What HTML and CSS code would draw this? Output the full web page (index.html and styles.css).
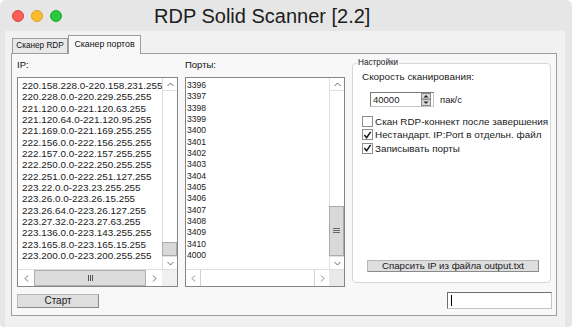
FILE: index.html
```html
<!DOCTYPE html>
<html>
<head>
<meta charset="utf-8">
<link rel="stylesheet" href="styles.css">
</head>
<body>
<div class="window">
  <div class="titlebar">
    <div class="lights">
      <span class="light red"></span><span class="light yellow"></span><span class="light green"></span>
    </div>
    <div class="title">RDP Solid Scanner [2.2]</div>
  </div>
  <div class="content">
    <div class="tabs">
      <div class="tab">Сканер RDP</div>
      <div class="tab active">Сканер портов</div>
    </div>
    <div class="panel">
      <div class="top-row">
        <div class="col ip-col">
          <div class="label">IP:</div>
          <div class="listbox ip-list">
            <div class="items ip-items">
              <div>220.158.228.0-220.158.231.255</div>
              <div>220.228.0.0-220.229.255.255</div>
              <div>221.120.0.0-221.120.63.255</div>
              <div>221.120.64.0-221.120.95.255</div>
              <div>221.169.0.0-221.169.255.255</div>
              <div>222.156.0.0-222.156.255.255</div>
              <div>222.157.0.0-222.157.255.255</div>
              <div>222.250.0.0-222.250.255.255</div>
              <div>222.251.0.0-222.251.127.255</div>
              <div>223.22.0.0-223.23.255.255</div>
              <div>223.26.0.0-223.26.15.255</div>
              <div>223.26.64.0-223.26.127.255</div>
              <div>223.27.32.0-223.27.63.255</div>
              <div>223.136.0.0-223.143.255.255</div>
              <div>223.165.8.0-223.165.15.255</div>
              <div>223.200.0.0-223.200.255.255</div>
            </div>
            <div class="vscroll">
              <div class="varrow"><svg width="7" height="5" viewBox="0 0 7 5"><polyline points="0.5,4 3.5,1 6.5,4" fill="none" stroke="#6a6a6a" stroke-width="1"/></svg></div>
              <div class="track"><div class="thumb ip-thumb"></div></div>
              <div class="varrow"><svg width="7" height="5" viewBox="0 0 7 5"><polyline points="0.5,1 3.5,4 6.5,1" fill="none" stroke="#6a6a6a" stroke-width="1"/></svg></div>
            </div>
            <div class="hscroll">
              <div class="harrow ip-harrow"><svg width="5" height="7" viewBox="0 0 5 7"><polyline points="4,0.5 1,3.5 4,6.5" fill="none" stroke="#6a6a6a" stroke-width="1"/></svg></div>
              <div class="hthumb"><svg width="7" height="6" viewBox="0 0 7 6"><path d="M1.5 0v6M3.5 0v6M5.5 0v6" stroke="#555" stroke-width="1"/></svg></div>
              <div class="harrow ip-harrow"><svg width="5" height="7" viewBox="0 0 5 7"><polyline points="1,0.5 4,3.5 1,6.5" fill="none" stroke="#6a6a6a" stroke-width="1"/></svg></div>
              <div class="corner"></div>
            </div>
          </div>
        </div>
        <div class="col port-col">
          <div class="label">Порты:</div>
          <div class="listbox port-list">
            <div class="items port-items">
              <div>3396</div><div>3397</div><div>3398</div><div>3399</div>
              <div>3400</div><div>3401</div><div>3402</div><div>3403</div>
              <div>3404</div><div>3405</div><div>3406</div><div>3407</div>
              <div>3408</div><div>3409</div><div>3410</div><div>4000</div>
            </div>
            <div class="vscroll">
              <div class="varrow"><svg width="7" height="5" viewBox="0 0 7 5"><polyline points="0.5,4 3.5,1 6.5,4" fill="none" stroke="#6a6a6a" stroke-width="1"/></svg></div>
              <div class="track"><div class="thumb port-thumb"><svg width="7" height="6" viewBox="0 0 7 6"><path d="M0 0.5h7M0 2.5h7M0 4.5h7" stroke="#666" stroke-width="1"/></svg></div></div>
              <div class="varrow"><svg width="7" height="5" viewBox="0 0 7 5"><polyline points="0.5,1 3.5,4 6.5,1" fill="none" stroke="#6a6a6a" stroke-width="1"/></svg></div>
            </div>
            <div class="hscroll">
              <div class="harrow port-harrow"><svg width="5" height="7" viewBox="0 0 5 7"><polyline points="4,0.5 1,3.5 4,6.5" fill="none" stroke="#8a8a8a" stroke-width="1"/></svg></div>
              <div class="hthumb empty"></div>
              <div class="harrow port-harrow"><svg width="5" height="7" viewBox="0 0 5 7"><polyline points="1,0.5 4,3.5 1,6.5" fill="none" stroke="#8a8a8a" stroke-width="1"/></svg></div>
              <div class="corner dotted"></div>
            </div>
          </div>
        </div>
        <div class="col settings-col">
          <fieldset class="group">
            <legend>Настройки</legend>
            <div class="group-body">
              <div class="speed-label">Скорость сканирования:</div>
              <div class="spin-row">
                <div class="spinbox">
                  <span class="spin-value">40000</span>
                  <svg class="spin-btn" width="10" height="13" viewBox="0 0 10 13">
                    <rect x="0.5" y="0.5" width="9" height="5.5" fill="#d8d8d8" stroke="#8a8a8a"/>
                    <rect x="0.5" y="6.5" width="9" height="6" fill="#d8d8d8" stroke="#8a8a8a"/>
                    <polygon points="2.5,4.5 5,2 7.5,4.5" fill="#222"/>
                    <polygon points="2.5,8.5 7.5,8.5 5,11" fill="#222"/>
                  </svg>
                </div>
                <span class="unit">пак/с</span>
              </div>
              <div class="checks">
                <div class="check-row"><span class="checkbox"></span><span>Скан RDP-коннект после завершения</span></div>
                <div class="check-row"><span class="checkbox"><svg width="10" height="10" viewBox="0 0 10 10"><polyline points="1.5,5 4,8 8.5,1.5" fill="none" stroke="#1a1a1a" stroke-width="1.7"/></svg></span><span>Нестандарт. IP:Port в отдельн. файл</span></div>
                <div class="check-row"><span class="checkbox"><svg width="10" height="10" viewBox="0 0 10 10"><polyline points="1.5,5 4,8 8.5,1.5" fill="none" stroke="#1a1a1a" stroke-width="1.7"/></svg></span><span>Записывать порты</span></div>
              </div>
              <button class="btn parse-btn">Спарсить IP из файла output.txt</button>
            </div>
          </fieldset>
        </div>
      </div>
      <div class="bottom-row">
        <button class="btn start-btn">Старт</button>
        <div class="textinput"><span class="caret"></span></div>
      </div>
    </div>
  </div>
</div>
</body>
</html>
```

FILE: styles.css
```css
* { box-sizing: border-box; }
html, body { margin: 0; padding: 0; background: #ffffff; }
body {
  width: 572px; height: 327px; overflow: hidden;
  font-family: "Liberation Sans", Arial, sans-serif; color: #1a1a1a;
}
.window {
  width: 572px; height: 327px;
  background: #e6e6e6;
  border-radius: 6px 6px 4px 4px;
  display: flex; flex-direction: column;
  overflow: hidden;
}
.titlebar {
  height: 31px; flex: none;
  display: flex; align-items: center;
  padding-left: 12px;
}
.lights { display: flex; gap: 7px; }
.light { width: 12px; height: 12px; border-radius: 50%; }
.red { background: #fc5f57; border: 1px solid #e2463f; }
.yellow { background: #fdbc2e; border: 1px solid #e0a028; }
.green { background: #2ac840; border: 1px solid #1eaa31; }
.title {
  margin-left: 92px;
  font-size: 20px; line-height: 24px; color: #1c1c1c;
}
.content {
  flex: 1;
  margin: 0 7px 0 5px;
  background: #f1f1f1;
  padding: 4px 8px 0 6px;
  display: flex; flex-direction: column;
}
.tabs { height: 18px; display: flex; align-items: flex-end; flex: none; }
.tab {
  width: 56px; height: 15px; margin-left: 1px;
  border: 1px solid #9d9d9d; border-bottom: none;
  background: #e8e8e8;
  font-size: 8.2px; line-height: 14px; text-align: center;
  color: #111;
}
.tab.active {
  width: 73px; height: 19px; margin-left: 0; margin-bottom: -1px;
  background: #f8f8f8;
  font-size: 8.8px; line-height: 17px;
  position: relative; z-index: 1;
}
.panel {
  height: 263px; flex: none;
  border: 1px solid #9d9d9d;
  background: #f8f8f8;
  padding: 4px 4px 6px 5px;
  display: flex; flex-direction: column; gap: 5px;
}
.top-row { height: 229px; display: flex; gap: 7px; }
.col { display: flex; flex-direction: column; }
.ip-col { width: 161px; }
.port-col { width: 160px; }
.settings-col { width: 199px; }
.label {
  height: 19px;
  font-size: 9.5px; line-height: 14px; color: #111;
}
.listbox {
  height: 210px;
  border: 1px solid #858585;
  background: #fff;
  display: grid;
  grid-template-columns: 1fr 15px;
  grid-template-rows: 1fr 17px;
}
.items {
  overflow: hidden; white-space: nowrap;
  padding: 2px 0 0 4px;
  line-height: 11.33px;
}
.ip-items { font-size: 9.9px; }
.port-items { font-size: 8.6px; padding-left: 1px; }
.vscroll {
  display: flex; flex-direction: column;
  border-left: 1px solid #dedede;
  background: #fff;
}
.varrow {
  height: 13px; flex: none;
  display: flex; align-items: center; justify-content: center;
  border-bottom: 1px solid #e2e2e2;
}
.varrow:last-child { border-bottom: none; border-top: 1px solid #e2e2e2; }
.track { flex: 1; display: flex; flex-direction: column; justify-content: flex-end; }
.thumb {
  background: #d9d9d9;
  border: 1px solid #aaaaaa;
  margin-left: -1px;
  display: flex; align-items: center; justify-content: center;
}
.ip-thumb { height: 14px; }
.port-thumb { height: 50px; }
.hscroll {
  grid-column: 1 / 3;
  display: flex;
  border-top: 1px solid #dedede;
}
.harrow {
  flex: none;
  display: flex; align-items: center; justify-content: center;
  background: #fff;
}
.ip-harrow { width: 16px; }
.port-harrow { width: 14px; }
.hthumb {
  flex: 1;
  background: #dcdcdc;
  border: 1px solid #b0b0b0;
  display: flex; align-items: center; justify-content: center;
}
.hthumb.empty { background: #fff; border-color: #d0d0d0; border-top: none; border-bottom: none; }
.corner { width: 15px; flex: none; background: #f0f0f0; }
.corner.dotted {
  background-color: #f4f4f4;
  background-image: radial-gradient(#dcdcdc 0.6px, transparent 0.8px);
  background-size: 2px 2px;
}
.group {
  margin: 0; padding: 0; min-width: 0;
  height: 225px;
  border: 1px solid #d6d6d6; border-radius: 4px;
  background: #fff;
}
.group legend {
  margin-left: 4px; padding: 0 1px;
  font-size: 8.2px; line-height: 10px; color: #222;
}
.group-body {
  height: 213px;
  padding: 0 0 9px 9px;
  display: flex; flex-direction: column;
}
.speed-label { margin-top: 2px; font-size: 9.9px; line-height: 14px; }
.spin-row { margin-top: 8px; height: 15px; display: flex; align-items: center; flex: none; }
.spinbox {
  margin-left: 8px;
  width: 64px; height: 15px;
  border: 1px solid #7a7a7a;
  border-right-color: #c4c4c4; border-bottom-color: #c4c4c4;
  background: #fff;
  display: flex; align-items: center;
  padding-left: 2px;
}
.spin-value { flex: 1; font-size: 9.5px; }
.spin-btn { margin-right: 2px; }
.unit { margin-left: 6px; font-size: 9.5px; }
.checks { margin-top: 7.5px; display: flex; flex-direction: column; }
.check-row {
  height: 13.5px; display: flex; align-items: center; gap: 2px;
  font-size: 9.9px; white-space: nowrap;
}
.checkbox {
  width: 11px; height: 11px; flex: none;
  border: 1px solid #8e8e8e; background: #fff;
  display: flex; align-items: center; justify-content: center;
}
.btn {
  font-family: "Liberation Sans", Arial, sans-serif;
  background: #dedede;
  border: 1px solid #8a8a8a;
  border-top-color: #b8b8b8; border-left-color: #b8b8b8;
  padding: 0; color: #1a1a1a; border-radius: 0;
}
.parse-btn {
  margin-top: auto; margin-left: 5px;
  width: 172px; height: 12px; flex: none;
  font-size: 9.7px; line-height: 10px;
}
.bottom-row { height: 17px; display: flex; align-items: center; justify-content: space-between; }
.start-btn { width: 82px; height: 14px; font-size: 10px; line-height: 12px; }
.textinput {
  width: 105px; height: 17px;
  border: 1px solid #c4c4c4;
  border-top-color: #6e6e6e; border-left-color: #6e6e6e;
  background: #fff;
  display: flex; align-items: center; padding-left: 3px;
}
.caret { width: 1px; height: 11px; background: #000; }
```
